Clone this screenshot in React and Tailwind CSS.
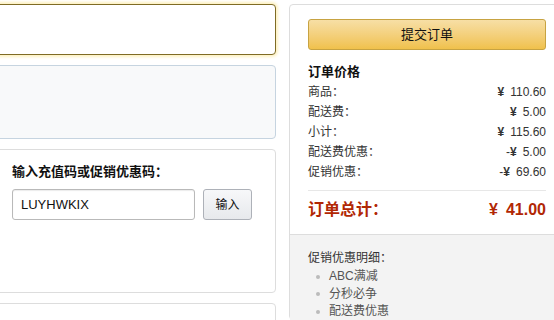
import React from "react";

const rows = [
  { label: "商品：", sign: "", value: "110.60" },
  { label: "配送费：", sign: "", value: "5.00" },
  { label: "小计：", sign: "", value: "115.60" },
  { label: "配送费优惠：", sign: "-", value: "5.00" },
  { label: "促销优惠：", sign: "-", value: "69.60" },
];

const promos = ["ABC满减", "分秒必争", "配送费优惠"];

export default function App() {
  return (
    <div
      className="w-[554px] h-[320px] overflow-hidden bg-white flex text-[#333]"
      style={{ fontFamily: '"Liberation Sans", "Noto Sans CJK SC", sans-serif' }}
    >
      {/* left column */}
      <div className="w-[300px] -ml-[24px] shrink-0 flex flex-col">
        <div className="shrink-0 mt-[4px] h-[51px] border border-[#7f6b25] rounded-[4px] bg-white shadow-[0_0_3px_2px_#fdf1c2]" />
        <div className="shrink-0 mt-[10px] h-[74px] border border-[#c6d4e0] rounded-[4px] bg-[#f8f9fa]" />
        <div className="shrink-0 mt-[10px] h-[144px] border border-[#dddddd] rounded-[4px] bg-white pl-[35px] pt-[12px]">
          <div className="h-5 leading-5 text-[13px] font-bold text-[#111]">输入充值码或促销优惠码：</div>
          <div className="mt-[7px] flex gap-[8px]">
            <div className="w-[183px] h-[31px] border border-[#b9b9b9] rounded-[3px] shadow-[inset_0_1px_1px_rgba(0,0,0,0.08)] flex items-center pl-[8px] text-[13px] text-[#111]">
              LUYHWKIX
            </div>
            <button className="w-[49px] h-[31px] border border-[#adb1b8] rounded-[3px] bg-gradient-to-b from-[#f7f8fa] to-[#e7e9ec] text-[12px] text-[#111]">
              输入
            </button>
          </div>
        </div>
        <div className="shrink-0 mt-[10px] h-[40px] border border-[#dddddd] rounded-[4px] bg-white" />
      </div>

      {/* right panel */}
      <div className="ml-[13px] mt-[4px] w-[276px] shrink-0 border border-[#dddddd] rounded-[4px] bg-white flex flex-col">
        <div className="shrink-0 px-[18px] pt-[14px] pb-[14px]">
          <button className="w-full h-[31px] border border-[#c7a342] rounded-[3px] bg-gradient-to-b from-[#f7dfa5] to-[#f0c14b] text-[13px] text-[#111]">
            提交订单
          </button>
          <div className="mt-[12px] h-5 leading-5 text-[13px] font-bold text-[#111]">订单价格</div>
          {rows.map((r) => (
            <div key={r.label} className="h-5 leading-5 flex justify-between text-[12px] text-[#333]">
              <span>{r.label}</span>
              <span>
                {r.sign}
                <span className="font-bold mr-[6px]">¥</span>
                {r.value}
              </span>
            </div>
          ))}
          <div className="mt-[8px] border-t border-[#e7e7e7]" />
          <div className="mt-[9px] h-5 leading-5 flex justify-between text-[16px] font-bold text-[#b12704]">
            <span>订单总计：</span>
            <span>
              <span className="mr-[8px]">¥</span>41.00
            </span>
          </div>
        </div>
        <div className="flex-1 border-t border-[#dddddd] bg-[#f3f3f3] px-[18px] pt-[13px]">
          <div className="h-5 leading-5 text-[12px] text-[#333]">促销优惠明细：</div>
          <ul className="text-[12px] text-[#555]">
            {promos.map((p) => (
              <li key={p} className="h-[17.5px] leading-[17.5px] flex items-center">
                <span className="w-[4px] h-[4px] rounded-full bg-[#bbbbbb] ml-[8px] mr-[9px]" />
                {p}
              </li>
            ))}
          </ul>
        </div>
      </div>
    </div>
  );
}
